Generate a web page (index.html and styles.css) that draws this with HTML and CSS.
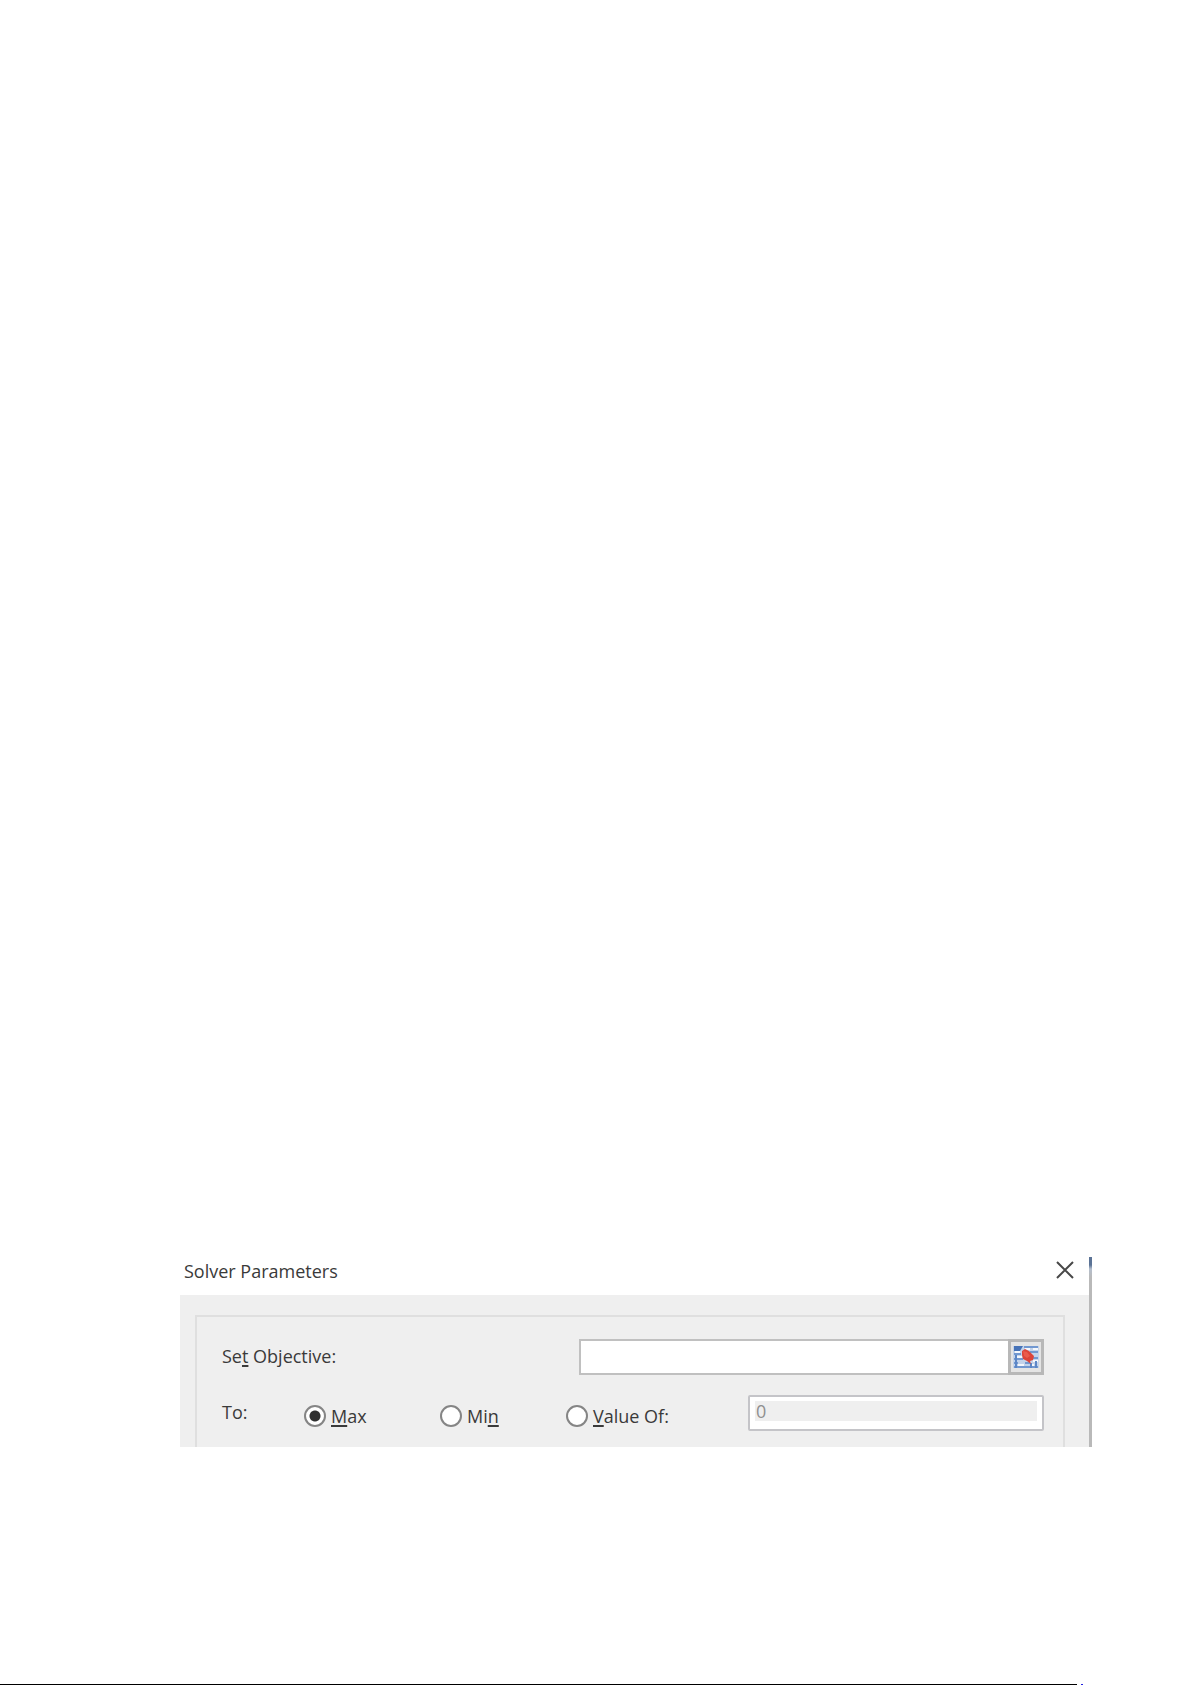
FILE: index.html
```html
<!DOCTYPE html>
<html lang="en">
<head>
<meta charset="utf-8">
<title>Solver Parameters</title>
<link rel="stylesheet" href="styles.css">
</head>
<body>
<main class="page">
  <section class="dialog" aria-labelledby="dialog-title">
    <div class="dialog-main">
      <header class="titlebar">
        <h1 class="title" id="dialog-title">Solver Parameters</h1>
        <button class="close" type="button" aria-label="Close">
          <svg width="18" height="18" viewBox="0 0 18 18" fill="none" stroke="#484848" stroke-width="2"><path d="M1 1l16 16M17 1L1 17"/></svg>
        </button>
      </header>
      <form class="body">
        <div class="group">
          <div class="row">
            <label class="row-label" for="objective">Se<u>t</u> Objective:</label>
            <div class="range">
              <input class="range-input" id="objective" type="text">
              <button class="range-button" type="button" aria-label="Select range">
                <svg width="26" height="24" viewBox="0 0 26 24">
                  <rect y="1" width="26" height="22" fill="#c3d3ea"/>
                  <path d="M1 1h9l-3 5H1z" fill="#4773b8"/>
                  <path d="M11 2h14M17 7h8M1 9h7M1 14h9M20 13h5M1 18h4M12 18h5M1 22h24" stroke="#7298d0" stroke-width="2"/>
                  <path d="M12 4h5M20 4h5M2 7h5M2 12h7M20 16h5M5 20h6M17 20h4" stroke="#f4f7fc" stroke-width="2"/>
                  <path d="M3 10v13M18 18v5M23 16v7" stroke="#5c86c6" stroke-width="2"/>
                  <path d="M9 6l3-2 4 2 5 5-1 4-3 1 1 3-4-3-4-2-1-4z" fill="#dc4439"/>
                  <path d="M10 6l4 1 3 4-3 2-3-2z" fill="#ea5b4c"/>
                </svg>
              </button>
            </div>
          </div>
          <div class="row">
            <span class="row-label to" id="to-label">To:</span>
            <div class="options" role="radiogroup" aria-labelledby="to-label">
              <label class="option"><input class="radio" type="radio" name="goal" checked><span><u>M</u>ax</span></label>
              <label class="option"><input class="radio" type="radio" name="goal"><span>Mi<u>n</u></span></label>
              <label class="option"><input class="radio" type="radio" name="goal"><span><u>V</u>alue Of:</span></label>
            </div>
            <div class="value"><input class="value-input" type="text" value="0" aria-label="Value" disabled></div>
          </div>
        </div>
      </form>
    </div>
    <div class="edge"></div>
  </section>
  <footer class="rule"><span class="rule-line"></span><span class="rule-dot"></span></footer>
</main>
</body>
</html>
```
FILE: styles.css
```css
* { box-sizing: border-box; }

body {
  margin: 0;
  background: #fff;
  color: #3a3a3a;
  font: 18px/24px "Open Sans", "Noto Sans", sans-serif;
}

.page {
  min-height: 100vh;
  display: flex;
  flex-direction: column;
  justify-content: flex-end;
}

.dialog {
  display: flex;
  margin: 0 100px 237px 180px;
}

.dialog-main { flex: 1; }

.edge {
  width: 3px;
  background: linear-gradient(#5b7396 0 8px, #b4bfce 12px, #b9b9b9 20px);
}

.titlebar {
  display: flex;
  justify-content: space-between;
  align-items: flex-start;
  height: 38px;
  padding: 2px 15px 0 4px;
}

.title {
  margin: 0;
  font-size: 18px;
  font-weight: 400;
  line-height: 24px;
}

.close {
  display: flex;
  padding: 2px 0;
  border: 0;
  background: none;
}

.body {
  padding: 20px 24px 0 15px;
  background: #efefef;
}

.group {
  display: flex;
  flex-direction: column;
  gap: 20px;
  padding: 22px 19px 16px 25px;
  border: 2px solid #dfdfdf;
  border-bottom: 0;
}

.row {
  display: flex;
  align-items: center;
  justify-content: space-between;
  height: 36px;
}

u {
  text-decoration-thickness: 2px;
  text-underline-offset: 2px;
}

.row-label { padding-bottom: 2px; }

.range {
  display: flex;
  width: 465px;
  height: 36px;
}

.range-input {
  flex: 1;
  min-width: 0;
  border: 2px solid #c0c0c0;
  border-right: 0;
  background: #fff;
  font: inherit;
}

.range-button {
  display: flex;
  align-items: center;
  justify-content: center;
  width: 36px;
  padding: 0;
  border: 3px solid #b8b8b8;
  background: #e4e4e4;
}

.to { width: 82px; }

.options {
  display: grid;
  flex: 1;
  grid-template-columns: 136px 126px auto;
  padding-top: 6px;
}

.option {
  display: flex;
  align-items: center;
  gap: 5px;
}

.radio {
  appearance: none;
  width: 22px;
  height: 22px;
  margin: 0;
  border: 2px solid #858585;
  border-radius: 50%;
  background: #fff;
}

.radio:checked {
  background: radial-gradient(circle, #303030 5px, #fff 6px);
}

.value {
  width: 296px;
  height: 36px;
  padding: 4px 5px 8px;
  border: 2px solid #c4c4c8;
  border-radius: 2px;
  background: #fff;
}

.value-input {
  display: block;
  width: 100%;
  height: 20px;
  padding: 0 1px;
  border: 0;
  background: #efefef;
  color: #909090;
  font: 18px/20px "Open Sans", "Noto Sans", sans-serif;
}

.rule {
  display: flex;
  gap: 4px;
  height: 1px;
  padding-right: 109px;
}

.rule-line {
  flex: 1;
  background: #000;
}

.rule-dot {
  width: 2px;
  background: #2020e0;
}
```
